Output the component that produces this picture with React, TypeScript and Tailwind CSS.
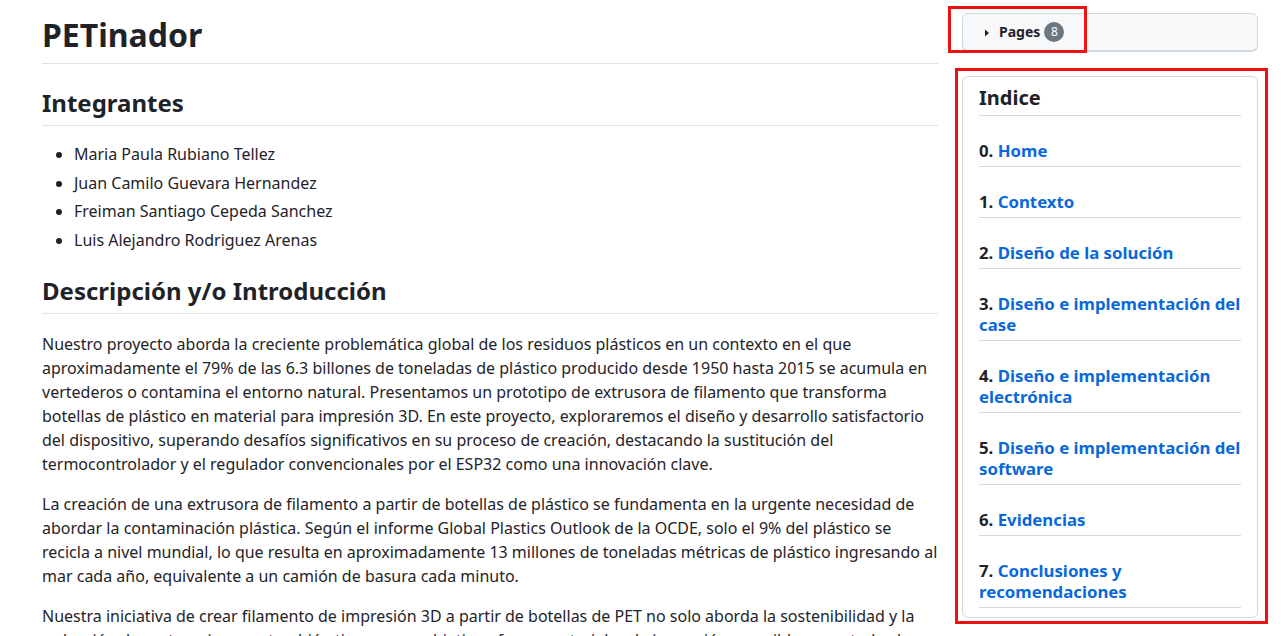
import React from "react";

const items: { n: string; t: string }[] = [
  { n: "0.", t: "Home" },
  { n: "1.", t: "Contexto" },
  { n: "2.", t: "Diseño de la solución" },
  { n: "3.", t: "Diseño e implementación del case" },
  { n: "4.", t: "Diseño e implementación electrónica" },
  { n: "5.", t: "Diseño e implementación del software" },
  { n: "6.", t: "Evidencias" },
  { n: "7.", t: "Conclusiones y recomendaciones" },
];

export default function App() {
  return (
    <div
      className="relative w-[1284px] h-[636px] overflow-hidden bg-white text-[#1f2328]"
      style={{ fontFamily: '"Noto Sans", "Liberation Sans", sans-serif' }}
    >
      <div className="flex gap-6 pl-[42px] pt-[13px]">
        {/* Main content */}
        <div className="w-[896px] shrink-0 pt-[2px]">
          <h1 className="text-[32px] leading-[40px] font-bold pb-[8px] border-b border-[#d1d9e0b3]">
            PETinador
          </h1>
          <h2 className="mt-6 text-[24px] leading-[30px] font-bold pb-[7px] border-b border-[#d1d9e0b3]">
            Integrantes
          </h2>
          <ul className="mt-4 pl-8 list-disc text-[16px] leading-[24px]">
            <li>Maria Paula Rubiano Tellez</li>
            <li className="mt-[4.7px]">Juan Camilo Guevara Hernandez</li>
            <li className="mt-[4.7px]">Freiman Santiago Cepeda Sanchez</li>
            <li className="mt-[4.7px]">Luis Alejandro Rodriguez Arenas</li>
          </ul>
          <h2 className="mt-6 text-[24px] leading-[30px] font-bold pb-[7px] border-b border-[#d1d9e0b3]">
            Descripción y/o Introducción
          </h2>
          <p className="mt-[18px] text-[16px] leading-[24px]">
            Nuestro proyecto aborda la creciente problemática global de los residuos plásticos en un contexto en el que
            aproximadamente el 79% de las 6.3 billones de toneladas de plástico producido desde 1950 hasta 2015 se acumula en
            vertederos o contamina el entorno natural. Presentamos un prototipo de extrusora de filamento que transforma
            botellas de plástico en material para impresión 3D. En este proyecto, exploraremos el diseño y desarrollo satisfactorio
            del dispositivo, superando desafíos significativos en su proceso de creación, destacando la sustitución del
            termocontrolador y el regulador convencionales por el ESP32 como una innovación clave.
          </p>
          <p className="mt-4 text-[16px] leading-[24px]">
            La creación de una extrusora de filamento a partir de botellas de plástico se fundamenta en la urgente necesidad de
            abordar la contaminación plástica. Según el informe Global Plastics Outlook de la OCDE, solo el 9% del plástico se
            recicla a nivel mundial, lo que resulta en aproximadamente 13 millones de toneladas métricas de plástico ingresando al
            mar cada año, equivalente a un camión de basura cada minuto.
          </p>
          <p className="mt-4 text-[16px] leading-[24px]">
            Nuestra iniciativa de crear filamento de impresión 3D a partir de botellas de PET no solo aborda la sostenibilidad y la
            reducción de costos, sino que también tiene como objetivo ofrecer materiales de impresión accesibles para todos los
            usuarios interesados en la fabricación digital.
          </p>
        </div>

        {/* Sidebar */}
        <div className="w-[296px] shrink-0">
          <div className="h-[38px] rounded-md border border-[#d1d9e0] bg-[#f6f8fa] shadow-[0_1px_0_#d1d9e0] flex items-center pl-[21px]">
            <svg width="6" height="8" viewBox="0 0 6 8" className="mt-[2px]">
              <path d="M1 0.5 L5 4 L1 7.5 Z" fill="#1f2328" />
            </svg>
            <span className="ml-[9px] text-[14px] font-bold leading-[20px]">Pages</span>
            <span className="ml-[4px] w-[20px] h-[20px] rounded-full bg-[#6e7781] text-white text-[12px] flex items-center justify-center leading-none">
              8
            </span>
          </div>

          <div className="mt-[25px] rounded-md border border-[#d1d9e0] px-4 pt-2 pb-[9px]">
            <h2 className="text-[20px] leading-[25px] font-bold pb-[5px] border-b border-[#d1d9e0]">Indice</h2>
            {items.map((it) => (
              <div
                key={it.n}
                className="mt-6 text-[16.8px] leading-[21px] font-bold pb-[5px] border-b border-[#d1d9e0]"
              >
                {it.n} <span className="text-[#0969da]">{it.t}</span>
              </div>
            ))}
          </div>
        </div>
      </div>

      {/* Red annotation boxes */}
      <div className="absolute left-[948px] top-[6px] w-[139px] h-[47px] border-[3px] border-[#ee1111] pointer-events-none" />
      <div className="absolute left-[955px] top-[68px] w-[313px] h-[556px] border-[3px] border-[#ee1111] pointer-events-none" />
    </div>
  );
}
